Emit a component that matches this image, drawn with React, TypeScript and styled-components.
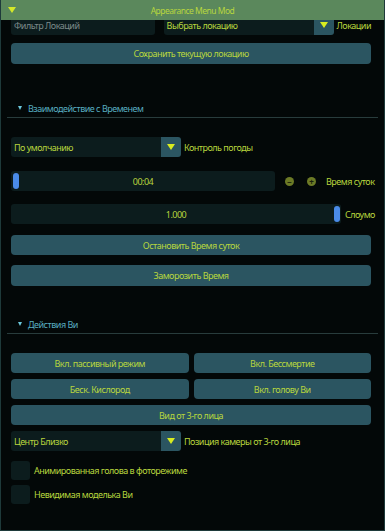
import React from 'react';
import styled, { createGlobalStyle } from 'styled-components';

const GlobalStyle = createGlobalStyle`
  html, body {
    margin: 0;
    padding: 0;
    background: #020607;
  }
  body {
    font-family: "Noto Sans", "DejaVu Sans", sans-serif;
    letter-spacing: -0.5px;
  }
`;

const TEXT = '#b8d63e';
const BTN = '#2b5561';
const FIELD = '#0c1c1d';

const Window = styled.div`
  width: 385px;
  height: 531px;
  box-sizing: border-box;
  border: 1px solid #1e3a3a;
  border-top: none;
  background: #030808;
  display: flex;
  flex-direction: column;
  overflow: hidden;
`;

const TitleBar = styled.div`
  height: 20px;
  flex-shrink: 0;
  background: #5b885c;
  display: flex;
  align-items: center;
  justify-content: center;
  position: relative;
  color: ${TEXT};
  font-size: 8.5px;
  z-index: 1;
`;

const TitleArrow = styled.span`
  position: absolute;
  left: 7px;
  top: 7px;
  width: 0;
  height: 0;
  border-left: 4px solid transparent;
  border-right: 4px solid transparent;
  border-top: 6px solid #d4e82a;
`;

const Body = styled.div`
  flex: 1;
  overflow: hidden;
`;

const Scroll = styled.div`
  margin-top: -5px;
  padding: 0 13px 0 10px;
  display: flex;
  flex-direction: column;
`;

const Row = styled.div<{ $top?: number }>`
  display: flex;
  align-items: center;
  gap: 5px;
  margin-top: ${({ $top }) => $top ?? 0}px;
`;

const Field = styled.div<{ $width: number; $muted?: boolean }>`
  width: ${({ $width }) => $width}px;
  height: 20px;
  background: ${FIELD};
  border-radius: 3px;
  display: flex;
  align-items: center;
  padding-left: 3px;
  box-sizing: border-box;
  font-size: 9px;
  color: ${({ $muted }) => ($muted ? '#7c8a8a' : TEXT)};
`;

const Combo = styled.div<{ $width: number }>`
  width: ${({ $width }) => $width}px;
  height: 20px;
  display: flex;
  border-radius: 3px;
  overflow: hidden;
  flex-shrink: 0;
`;

const ComboValue = styled.div`
  flex: 1;
  background: ${FIELD};
  display: flex;
  align-items: center;
  padding-left: 3px;
  font-size: 9px;
  color: ${TEXT};
`;

const ComboButton = styled.div`
  width: 20px;
  background: ${BTN};
  display: flex;
  align-items: center;
  justify-content: center;
`;

const DownArrow = styled.span`
  width: 0;
  height: 0;
  border-left: 4px solid transparent;
  border-right: 4px solid transparent;
  border-top: 6px solid #d8ec20;
`;

const Label = styled.span`
  font-size: 9px;
  color: ${TEXT};
  white-space: nowrap;
`;

const Button = styled.div<{ $top?: number; $height?: number }>`
  height: ${({ $height }) => $height ?? 20}px;
  flex: 1 0 auto;
  background: ${BTN};
  border-radius: 4px;
  display: flex;
  align-items: center;
  justify-content: center;
  font-size: 9px;
  color: ${TEXT};
  margin-top: ${({ $top }) => $top ?? 0}px;
`;

const Header = styled.div<{ $top: number }>`
  margin: ${({ $top }) => $top}px -7px 0 -4px;
  height: 16px;
  border-bottom: 1px solid #283c3c;
  display: flex;
  align-items: center;
  gap: 6px;
  padding-left: 11px;
  padding-bottom: 1px;
  font-size: 9px;
  color: #58aec0;
`;

const HeaderArrow = styled.span`
  width: 0;
  height: 0;
  border-left: 2.5px solid transparent;
  border-right: 2.5px solid transparent;
  border-top: 4px solid #6cc8dc;
`;

const Slider = styled.div<{ $width: number }>`
  width: ${({ $width }) => $width}px;
  height: 20px;
  background: ${FIELD};
  border-radius: 3px;
  position: relative;
  display: flex;
  align-items: center;
  justify-content: center;
  font-size: 9px;
  color: ${TEXT};
  flex-shrink: 0;
`;

const Grab = styled.span<{ $left: number }>`
  position: absolute;
  left: ${({ $left }) => $left}px;
  top: 2px;
  width: 6px;
  height: 16px;
  border-radius: 3px;
  background: #4a8be8;
`;

const Stepper = styled.span`
  width: 9px;
  height: 9px;
  border-radius: 50%;
  background: #6c7a26;
  color: #1a200a;
  font-size: 8px;
  line-height: 9px;
  letter-spacing: 0;
  text-align: center;
  font-weight: 700;
  flex-shrink: 0;
`;

const Checkbox = styled.span`
  width: 19px;
  height: 19px;
  border-radius: 3px;
  background: ${FIELD};
  flex-shrink: 0;
`;

const Grid = styled.div`
  display: grid;
  grid-template-columns: 1fr 1fr;
  gap: 6px 5px;
  margin-top: 19px;
`;

const App: React.FC = () => {
  return (
    <>
      <GlobalStyle />
      <Window>
        <TitleBar>
          <TitleArrow />
          Appearance Menu Mod
        </TitleBar>
        <Body>
          <Scroll>
            <Row>
              <Field $width={148} $muted>
                Фильтр Локаций
              </Field>
              <Combo $width={170} style={{ marginLeft: 4 }}>
                <ComboValue>Выбрать локацию</ComboValue>
                <ComboButton>
                  <DownArrow />
                </ComboButton>
              </Combo>
              <Label style={{ marginLeft: -2 }}>Локации</Label>
            </Row>
            <Row $top={8}>
              <Button $height={21}>Сохранить текущую локацию</Button>
            </Row>

            <Header $top={36}>
              <HeaderArrow />
              Взаимодействие с Временем
            </Header>

            <Row $top={19}>
              <Combo $width={170}>
                <ComboValue>По умолчанию</ComboValue>
                <ComboButton>
                  <DownArrow />
                </ComboButton>
              </Combo>
              <Label style={{ marginLeft: -2 }}>Контроль погоды</Label>
            </Row>
            <Row $top={14}>
              <Slider $width={264}>
                <Grab $left={2} />
                00:04
              </Slider>
              <Stepper style={{ marginLeft: 5 }}>−</Stepper>
              <Stepper style={{ marginLeft: 8 }}>+</Stepper>
              <Label style={{ marginLeft: 5 }}>Время суток</Label>
            </Row>
            <Row $top={13}>
              <Slider $width={330}>
                <Grab $left={323} />
                1.000
              </Slider>
              <Label style={{ marginLeft: -1 }}>Слоумо</Label>
            </Row>
            <Button $top={11}>Остановить Время суток</Button>
            <Button $top={10} $height={21}>
              Заморозить Время
            </Button>

            <Header $top={30}>
              <HeaderArrow />
              Действия Ви
            </Header>

            <Grid>
              <Button>Вкл. пассивный режим</Button>
              <Button>Вкл. Бессмертие</Button>
              <Button>Беск. Кислород</Button>
              <Button>Вкл. голову Ви</Button>
            </Grid>
            <Button $top={6}>Вид от 3-го лица</Button>
            <Row $top={6}>
              <Combo $width={170}>
                <ComboValue>Центр Близко</ComboValue>
                <ComboButton>
                  <DownArrow />
                </ComboButton>
              </Combo>
              <Label style={{ marginLeft: -2 }}>Позиция камеры от 3-го лица</Label>
            </Row>
            <Row $top={10} style={{ gap: 4 }}>
              <Checkbox />
              <Label>Анимированная голова в фоторежиме</Label>
            </Row>
            <Row $top={5} style={{ gap: 4 }}>
              <Checkbox />
              <Label>Невидимая моделька Ви</Label>
            </Row>
          </Scroll>
        </Body>
      </Window>
    </>
  );
};

export default App;
